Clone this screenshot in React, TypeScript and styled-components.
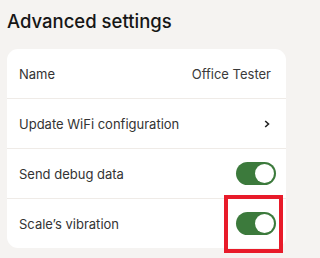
import { createGlobalStyle, styled } from "styled-components";

const GlobalStyle = createGlobalStyle`
  html, body {
    margin: 0;
    padding: 0;
    background: #f5f3f1;
  }
  body {
    font-family: Inter, "Liberation Sans", sans-serif;
    -webkit-font-smoothing: antialiased;
  }
`;

const Page = styled.div`
  width: 293px;
  height: 258px;
  padding: 10px 7px 0 7px;
  box-sizing: border-box;
  overflow: hidden;
`;

const Title = styled.h1`
  margin: 0;
  font-size: 18.5px;
  line-height: 22px;
  font-weight: 500;
  color: #161616;
`;

const Card = styled.div`
  margin-top: 17px;
  background: #ffffff;
  border-radius: 11px;
  display: flex;
  flex-direction: column;
`;

const Row = styled.div`
  height: 49px;
  padding: 0 15px 0 12px;
  display: flex;
  align-items: center;
  justify-content: space-between;
  border-top: 1px solid #efebe7;
  position: relative;

  &:first-child {
    border-top: none;
  }
`;

const Label = styled.span`
  font-size: 13px;
  color: #333333;
`;

const Value = styled.span`
  font-size: 13px;
  color: #3a3a3a;
`;

const Chevron = styled.svg`
  width: 6px;
  height: 8px;
  margin-right: 1px;
`;

const Toggle = styled.div<{ $on: boolean }>`
  width: 40px;
  height: 23px;
  border-radius: 12px;
  background: ${(p) => (p.$on ? "#3c7a3c" : "#cfcac5")};
  display: flex;
  align-items: center;
  justify-content: ${(p) => (p.$on ? "flex-end" : "flex-start")};
  padding: 2px;
  box-sizing: border-box;
  margin-right: -5px;
`;

const Knob = styled.div`
  width: 19px;
  height: 19px;
  border-radius: 50%;
  background: #ffffff;
`;

const Highlight = styled.div`
  position: absolute;
  right: 3px;
  top: -4px;
  width: 59px;
  height: 58px;
  border: 4px solid #e81b2a;
  box-sizing: border-box;
  pointer-events: none;
`;

export default function App() {
  return (
    <Page>
      <GlobalStyle />
      <Title>Advanced settings</Title>
      <Card>
        <Row>
          <Label>Name</Label>
          <Value>Office Tester</Value>
        </Row>
        <Row>
          <Label>Update WiFi configuration</Label>
          <Chevron viewBox="0 0 6 8">
            <path d="M1.2 1 L4.5 4 L1.2 7" fill="none" stroke="#222" strokeWidth="1.6" />
          </Chevron>
        </Row>
        <Row>
          <Label>Send debug data</Label>
          <Toggle $on>
            <Knob />
          </Toggle>
        </Row>
        <Row>
          <Label>Scale’s vibration</Label>
          <Toggle $on>
            <Knob />
          </Toggle>
          <Highlight />
        </Row>
      </Card>
    </Page>
  );
}
